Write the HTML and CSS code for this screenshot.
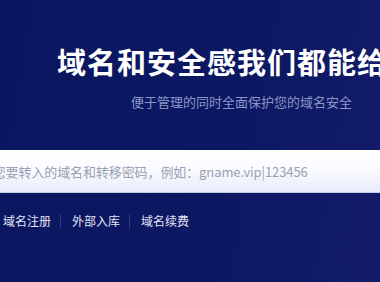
FILE: index.html
```html
<!DOCTYPE html>
<html lang="zh">
<head>
<meta charset="utf-8">
<link rel="stylesheet" href="styles.css">
</head>
<body>
<section class="hero">
  <h1 class="title">域名和安全感我们都能给</h1>
  <p class="subtitle">便于管理的同时全面保护您的域名安全</p>
  <div class="search">
    <input class="search-input" type="text" placeholder="请输入您要转入的域名和转移密码，例如：gname.vip|123456">
  </div>
  <nav class="links">
    <a class="link">域名注册</a>
    <span class="sep"></span>
    <a class="link">外部入库</a>
    <span class="sep"></span>
    <a class="link">域名续费</a>
  </nav>
</section>
</body>
</html>
```
FILE: styles.css
```css
html, body {
  margin: 0;
  padding: 0;
}
body {
  width: 380px;
  height: 282px;
  overflow: hidden;
  background: linear-gradient(100deg, #0b1660 0%, #0d1863 60%, #121c69 100%);
  font-family: "Noto Sans CJK SC", "Noto Sans", sans-serif;
}
.hero {
  display: flex;
  flex-direction: column;
  padding-top: 46px;
}
.title {
  margin: 0;
  padding-left: 57px;
  font-size: 29px;
  line-height: 30px;
  font-weight: 700;
  letter-spacing: 1px;
  color: #ffffff;
  white-space: nowrap;
}
.subtitle {
  margin: 17px 0 0;
  padding-left: 131px;
  font-size: 13px;
  line-height: 18px;
  color: #8a96c8;
  white-space: nowrap;
}
.search {
  margin: 39px 0 0 -56px;
  width: 460px;
  height: 42px;
  background: linear-gradient(180deg, #ffffff 0%, #fbfcff 40%, #e8ecfb 100%);
  border-bottom: 1px solid #c4cbe6;
  display: flex;
}
.search-input {
  flex: 1;
  border: 0;
  outline: 0;
  background: transparent;
  padding: 0 0 0 10px;
  font-family: "Noto Sans CJK SC", "Noto Sans", sans-serif;
  font-size: 13px;
  letter-spacing: -0.1px;
  color: #333;
}
.search-input::placeholder {
  color: #9a9fb3;
}
.links {
  display: flex;
  align-items: center;
  margin-top: 20px;
  padding-left: 3px;
}
.link {
  font-size: 12px;
  line-height: 16px;
  color: #e3e6f6;
  white-space: nowrap;
}
.sep {
  width: 1px;
  height: 14px;
  margin: 0 11px 0 9px;
  background: #2f3a86;
}
```
